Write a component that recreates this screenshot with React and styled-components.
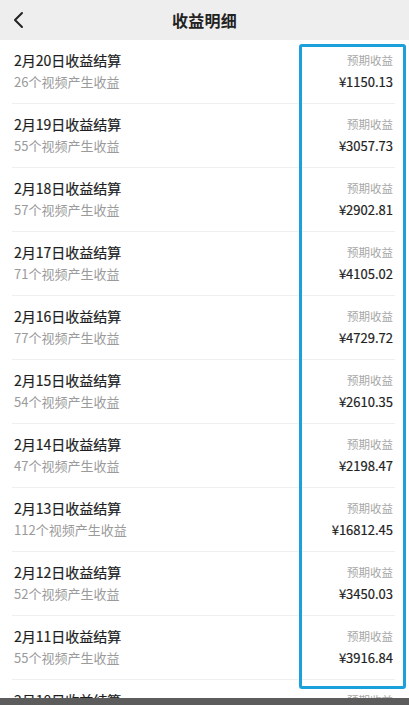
import React from "react";
import styled, { createGlobalStyle } from "styled-components";

const GlobalStyle = createGlobalStyle`
  html, body {
    margin: 0;
    padding: 0;
    background: #ffffff;
    height: 705px;
    overflow: hidden;
  }
  body {
    font-family: "Noto Sans CJK SC", "Noto Sans", sans-serif;
  }
`;

const Page = styled.div`
  position: relative;
  width: 409px;
  height: 705px;
  overflow: hidden;
  background: #fff;
`;

const TopBar = styled.div`
  height: 40px;
  background: #eeeeee;
  display: flex;
  align-items: center;
  justify-content: center;
  position: relative;
`;

const Back = styled.div`
  position: absolute;
  left: 12px;
  top: 10px;
  width: 14px;
  height: 20px;
  display: flex;
`;

const Title = styled.div`
  font-size: 16px;
  font-weight: 700;
  color: #222;
  letter-spacing: 0.3px;
`;

const List = styled.div`
  display: flex;
  flex-direction: column;
`;

const Row = styled.div`
  height: 64px;
  box-sizing: border-box;
  margin: 0 14px 0 12px;
  padding: 0 2px;
  border-bottom: 1px solid #efefef;
  display: flex;
  align-items: center;
  justify-content: space-between;
`;

const Col = styled.div`
  display: flex;
  flex-direction: column;
  align-items: ${(p) => (p.right ? "flex-end" : "flex-start")};
  gap: 2px;
  margin-top: -2px;
`;

const Name = styled.div`
  font-size: 14px;
  line-height: 20px;
  font-weight: 400;
  color: #1e1e1e;
  -webkit-text-stroke: 0.2px #1e1e1e;
`;

const Sub = styled.div`
  font-size: 13px;
  line-height: 20px;
  color: #9a9a9a;
`;

const Label = styled.div`
  font-size: 11.5px;
  line-height: 20px;
  color: #a8a8a8;
`;

const Amount = styled.div`
  font-size: 13px;
  line-height: 20px;
  font-weight: 400;
  color: #222;
  -webkit-text-stroke: 0.2px #222;
`;

const Highlight = styled.div`
  position: absolute;
  left: 299px;
  top: 44px;
  width: 107px;
  height: 645px;
  box-sizing: border-box;
  border: 3px solid #1ba0dc;
  border-radius: 3px;
  pointer-events: none;
`;

const BottomStrip = styled.div`
  position: absolute;
  left: 0;
  right: 0;
  bottom: 0;
  height: 7px;
  background: #5c5c5c;
`;

const rows = [
  { day: "2月20日", count: 26, amount: "1150.13" },
  { day: "2月19日", count: 55, amount: "3057.73" },
  { day: "2月18日", count: 57, amount: "2902.81" },
  { day: "2月17日", count: 71, amount: "4105.02" },
  { day: "2月16日", count: 77, amount: "4729.72" },
  { day: "2月15日", count: 54, amount: "2610.35" },
  { day: "2月14日", count: 47, amount: "2198.47" },
  { day: "2月13日", count: 112, amount: "16812.45" },
  { day: "2月12日", count: 52, amount: "3450.03" },
  { day: "2月11日", count: 55, amount: "3916.84" },
  { day: "2月10日", count: 48, amount: "2875.60" },
];

export default function App() {
  return (
    <Page>
      <GlobalStyle />
      <TopBar>
        <Back>
          <svg width="14" height="20" viewBox="0 0 14 20">
            <path
              d="M10 3 L3 10 L10 17"
              fill="none"
              stroke="#222"
              strokeWidth="2"
              strokeLinecap="round"
              strokeLinejoin="round"
            />
          </svg>
        </Back>
        <Title>收益明细</Title>
      </TopBar>
      <List>
        {rows.map((r) => (
          <Row key={r.day}>
            <Col>
              <Name>{r.day}收益结算</Name>
              <Sub>{r.count}个视频产生收益</Sub>
            </Col>
            <Col right>
              <Label>预期收益</Label>
              <Amount>¥{r.amount}</Amount>
            </Col>
          </Row>
        ))}
      </List>
      <Highlight />
      <BottomStrip />
    </Page>
  );
}
